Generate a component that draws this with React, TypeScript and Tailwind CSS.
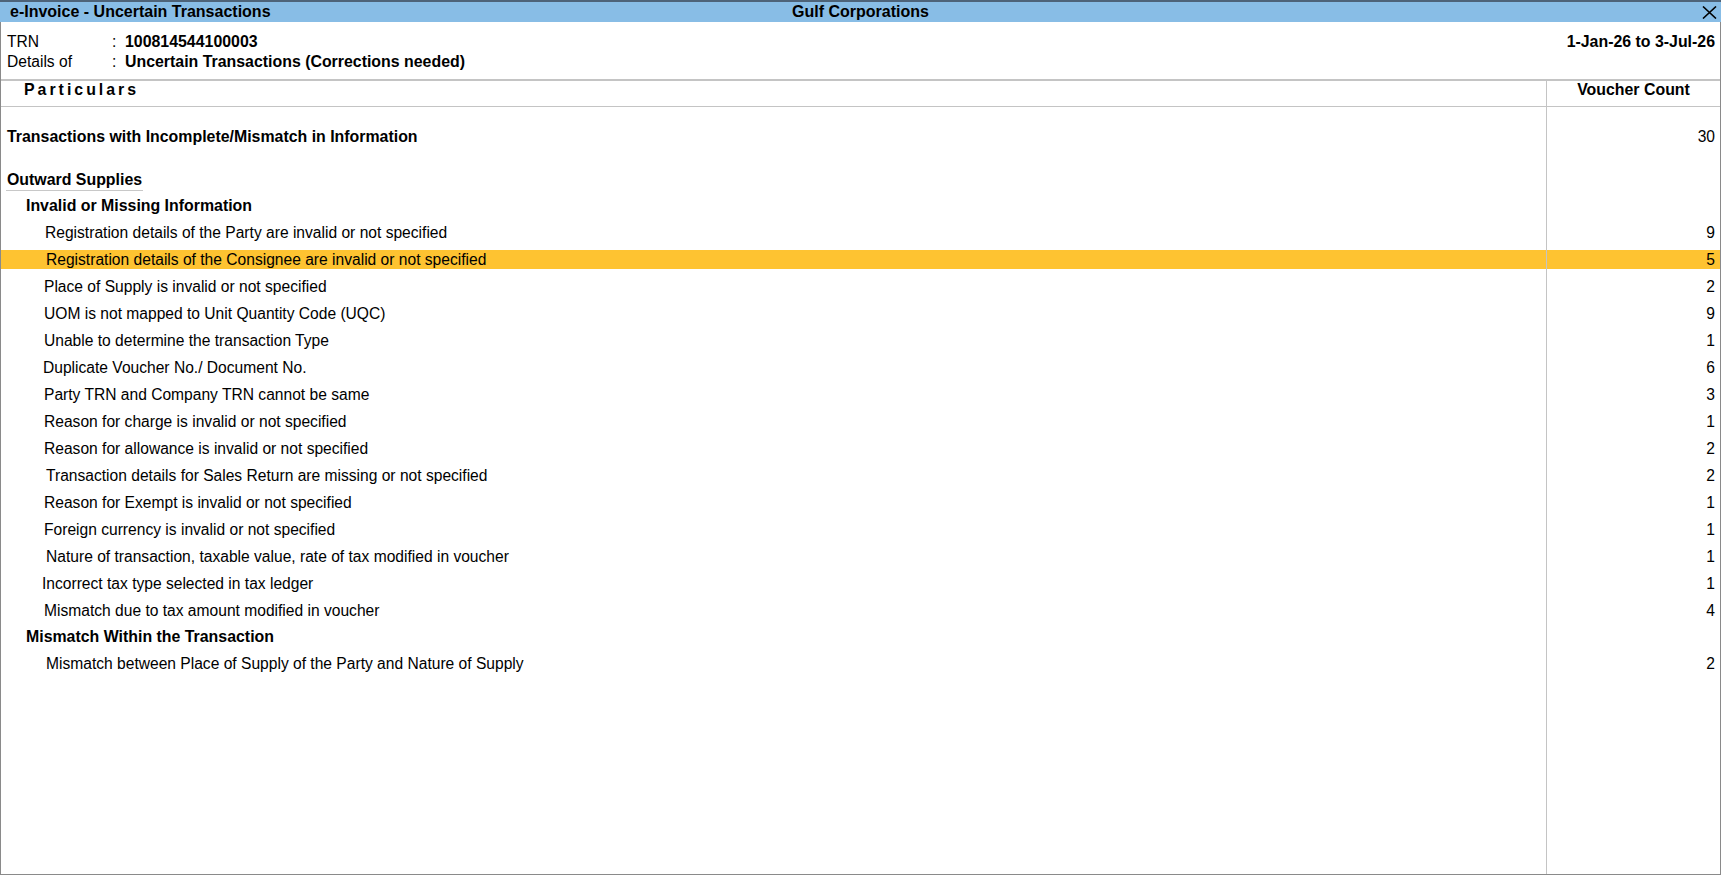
import React from "react";

type Item = { label: string; count: string; indent: string; active?: boolean };

const ITEMS: Item[] = [
  { label: "Registration details of the Party are invalid or not specified", count: "9", indent: "pl-[44px]" },
  { label: "Registration details of the Consignee are invalid or not specified", count: "5", indent: "pl-[45px]", active: true },
  { label: "Place of Supply is invalid or not specified", count: "2", indent: "pl-[43px]" },
  { label: "UOM is not mapped to Unit Quantity Code (UQC)", count: "9", indent: "pl-[43px]" },
  { label: "Unable to determine the transaction Type", count: "1", indent: "pl-[43px]" },
  { label: "Duplicate Voucher No./ Document No.", count: "6", indent: "pl-[42px]" },
  { label: "Party TRN and Company TRN cannot be same", count: "3", indent: "pl-[43px]" },
  { label: "Reason for charge is invalid or not specified", count: "1", indent: "pl-[43px]" },
  { label: "Reason for allowance is invalid or not specified", count: "2", indent: "pl-[43px]" },
  { label: "Transaction details for Sales Return are missing or not specified", count: "2", indent: "pl-[45px]" },
  { label: "Reason for Exempt is invalid or not specified", count: "1", indent: "pl-[43px]" },
  { label: "Foreign currency is invalid or not specified", count: "1", indent: "pl-[43px]" },
  { label: "Nature of transaction, taxable value, rate of tax modified in voucher", count: "1", indent: "pl-[45px]" },
  { label: "Incorrect tax type selected in tax ledger", count: "1", indent: "pl-[41px]" },
  { label: "Mismatch due to tax amount modified in voucher", count: "4", indent: "pl-[43px]" },
];

function Row({
  left,
  right,
  height,
  active,
}: {
  left?: React.ReactNode;
  right?: React.ReactNode;
  height: string;
  active?: boolean;
}) {
  return (
    <div className={`flex ${height}`}>
      <div className="flex flex-1 items-center">
        <div className={`flex h-[19px] w-full items-center ${active ? "bg-[#fec331]" : ""}`}>{left}</div>
      </div>
      <div className="flex w-[174px] items-center border-l border-[#c4c4c4]">
        <div
          className={`flex h-[19px] w-full items-center justify-end pr-[5px] text-[15.6px] ${active ? "bg-[#fec331]" : ""}`}
        >
          {right}
        </div>
      </div>
    </div>
  );
}

export default function App() {
  return (
    <div
      className="flex h-[875px] w-[1721px] flex-col overflow-hidden bg-white text-black"
      style={{ fontFamily: '"Liberation Sans", Arial, sans-serif' }}
    >
      {/* Title bar */}
      <div className="grid h-[22px] grid-cols-3 items-center border-t-2 border-[#4d6379] bg-[#88bde6] text-[16px] font-bold leading-[20px]">
        <div className="pl-[10px]">e-Invoice - Uncertain Transactions</div>
        <div className="text-center">Gulf Corporations</div>
        <div className="flex justify-end pr-[4px]">
          <svg width="15" height="13" viewBox="0 0 15 13" fill="none">
            <path d="M1 0.5 L14 12.5 M14 0.5 L1 12.5" stroke="#000" strokeWidth="1.6" />
          </svg>
        </div>
      </div>

      <div className="flex flex-1 flex-col border-x border-b border-[#8a8a8a]">
        {/* Info */}
        <div className="flex h-[57px] justify-between pt-[10px] pr-[5px] pl-[6px] text-[15.6px] leading-[20px]">
          <div className="flex flex-col">
            <div className="flex">
              <span className="w-[105px]">TRN</span>
              <span className="w-[13px]">:</span>
              <span className="text-[15.9px] font-bold">100814544100003</span>
            </div>
            <div className="flex">
              <span className="w-[105px]">Details of</span>
              <span className="w-[13px]">:</span>
              <span className="text-[15.9px] font-bold">Uncertain Transactions (Corrections needed)</span>
            </div>
          </div>
          <div className="text-[15.9px] font-bold">1-Jan-26 to 3-Jul-26</div>
        </div>

        {/* Column header */}
        <div className="flex h-[28px] border-t-2 border-b border-[#c4c4c4] text-[15.9px] font-bold leading-[16px]">
          <div className="flex-1 pt-[1px] pl-[23px] tracking-[3px]">Particulars</div>
          <div className="w-[174px] border-l border-[#c4c4c4] pt-[1px] text-center">Voucher Count</div>
        </div>

        {/* Body */}
        <div className="flex flex-1 flex-col text-[15.6px]">
          <Row height="h-[16px]" />
          <Row
            height="h-[27px]"
            left={<span className="pl-[6px] text-[15.9px] font-bold">Transactions with Incomplete/Mismatch in Information</span>}
            right="30"
          />
          <Row height="h-[16px]" />
          <Row
            height="h-[26px]"
            left={
              <span className="ml-[5px] inline-block border-b border-[#c8c8c8] px-[1px] pt-[2px] text-[15.9px] leading-[20px] font-bold">
                Outward Supplies
              </span>
            }
          />
          <Row
            height="h-[27px]"
            left={<span className="pl-[25px] text-[15.9px] font-bold">Invalid or Missing Information</span>}
          />
          {ITEMS.map((item) => (
            <Row
              key={item.label}
              height="h-[27px]"
              active={item.active}
              left={<span className={item.indent}>{item.label}</span>}
              right={item.count}
            />
          ))}
          <Row
            height="h-[26px]"
            left={<span className="pl-[25px] text-[15.9px] font-bold">Mismatch Within the Transaction</span>}
          />
          <Row
            height="h-[27px]"
            left={<span className="pl-[45px]">Mismatch between Place of Supply of the Party and Nature of Supply</span>}
            right="2"
          />
          <div className="flex flex-1">
            <div className="flex-1" />
            <div className="w-[174px] border-l border-[#c4c4c4]" />
          </div>
        </div>
      </div>
    </div>
  );
}
